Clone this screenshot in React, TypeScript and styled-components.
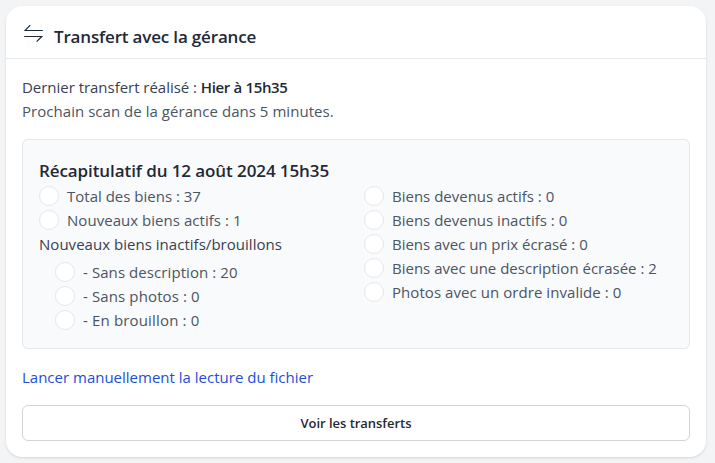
import React from 'react';
import styled, { createGlobalStyle } from 'styled-components';

const GlobalStyle = createGlobalStyle`
  *, *::before, *::after { box-sizing: border-box; }
  body {
    margin: 0;
    background: #f3f4f6;
    color: #374151;
    font-family: 'Open Sans', 'Noto Sans', sans-serif;
    font-size: 15px;
    line-height: 24px;
  }
`;

const Page = styled.main`
  padding: 6px 9px 6px 6px;
  height: 463px;
`;

const Card = styled.section`
  height: 451px;
  background: #fff;
  border-radius: 16px;
  box-shadow: 0 1px 3px rgba(0, 0, 0, 0.1), 0 1px 2px -1px rgba(0, 0, 0, 0.1);
`;

const CardHeader = styled.header`
  display: flex;
  align-items: center;
  gap: 10px;
  height: 53px;
  padding: 10px 16px 0 18px;
  border-bottom: 1px solid #e5e7eb;
`;

const TransferIcon = styled.svg`
  flex: none;
  width: 20px;
  height: 20px;
  margin-top: -8px;
`;

const CardTitle = styled.h2<{ $tracking?: number }>`
  margin: 0;
  color: #1f2937;
  font-size: 17px;
  font-weight: 600;
  line-height: 28px;
  white-space: nowrap;
  letter-spacing: ${({ $tracking = 0 }) => $tracking}px;
`;

const SummaryTitle = styled(CardTitle)`
  height: 28px;
  line-height: 30px;
`;

const CardBody = styled.div`
  display: flex;
  flex-direction: column;
  padding: 16px 16px 16px;
`;

const Line = styled.p<{ $muted?: boolean; $tracking?: number }>`
  margin: 0;
  color: ${({ $muted }) => ($muted ? '#4b5563' : '#374151')};
  white-space: nowrap;
  letter-spacing: ${({ $tracking = 0 }) => $tracking}px;
`;

const Strong = styled.strong`
  color: #1f2937;
  font-weight: 600;
  letter-spacing: -0.35px;
`;

const Summary = styled.section`
  height: 210px;
  margin-top: 16px;
  padding: 16px;
  background: #f9fafb;
  border: 1px solid #e5e7eb;
  border-radius: 6px;
`;

const Columns = styled.div`
  display: grid;
  grid-template-columns: 1fr 1fr;
  gap: 16px;
`;

const List = styled.ul<{ $nested?: boolean }>`
  margin: 0;
  padding: ${({ $nested }) => ($nested ? '4px 0 0 16px' : '0')};
  list-style: none;
`;

const Item = styled.li<{ $tracking?: number }>`
  display: flex;
  align-items: center;
  gap: 8px;
  height: 24px;
  color: #4b5563;
  white-space: nowrap;
  letter-spacing: ${({ $tracking = 0 }) => $tracking}px;
`;

const Dot = styled.span`
  flex: none;
  width: 20px;
  height: 20px;
  background: #fff;
  border: 1px solid #e5e7eb;
  border-radius: 50%;
`;

const Link = styled.a`
  align-self: flex-start;
  margin-top: 16px;
  color: #1d4ed8;
  text-decoration: none;
  white-space: nowrap;
`;

const Button = styled.button`
  height: 36px;
  margin-top: 16px;
  padding: 0;
  background: #fff;
  border: 1px solid #d1d5db;
  border-radius: 6px;
  color: #1f2937;
  font-family: inherit;
  font-size: 13px;
  font-weight: 600;
  line-height: 20px;
  letter-spacing: -0.04px;
`;

type Entry = { label: string; tracking?: number };

const totals: Entry[] = [
  { label: 'Total des biens : 37' },
  { label: 'Nouveaux biens actifs : 1', tracking: 0.04 },
];
const inactive: Entry[] = [
  { label: '- Sans description : 20', tracking: 0.08 },
  { label: '- Sans photos : 0', tracking: 0.12 },
  { label: '- En brouillon : 0', tracking: 0.16 },
];
const changes: Entry[] = [
  { label: 'Biens devenus actifs : 0' },
  { label: 'Biens devenus inactifs : 0' },
  { label: 'Biens avec un prix écrasé : 0', tracking: -0.03 },
  { label: 'Biens avec une description écrasée : 2' },
  { label: 'Photos avec un ordre invalide : 0', tracking: 0.06 },
];

function EntryList({ entries, nested }: { entries: Entry[]; nested?: boolean }) {
  return (
    <List $nested={nested}>
      {entries.map(({ label, tracking }) => (
        <Item key={label} $tracking={tracking}>
          <Dot />
          <span>{label}</span>
        </Item>
      ))}
    </List>
  );
}

export default function App() {
  return (
    <Page>
      <GlobalStyle />
      <Card>
        <CardHeader>
          <TransferIcon viewBox="0 0 20 20" fill="none" stroke="#1f2937" strokeWidth="1.2" aria-hidden="true">
            <path d="M18.8 7.5H1L6.2 2.2M.2 13.5h17.6L12.6 18.6" />
          </TransferIcon>
          <CardTitle $tracking={-0.17}>Transfert avec la gérance</CardTitle>
        </CardHeader>
        <CardBody>
          <Line $tracking={-0.03}>
            Dernier transfert réalisé : <Strong>Hier à 15h35</Strong>
          </Line>
          <Line $muted $tracking={0.04}>Prochain scan de la gérance dans 5 minutes.</Line>
          <Summary>
            <SummaryTitle as="h3" $tracking={-0.09}>Récapitulatif du 12 août 2024 15h35</SummaryTitle>
            <Columns>
              <div>
                <EntryList entries={totals} />
                <Line $tracking={0.03}>Nouveaux biens inactifs/brouillons</Line>
                <EntryList entries={inactive} nested />
              </div>
              <EntryList entries={changes} />
            </Columns>
          </Summary>
          <Link href="#">Lancer manuellement la lecture du fichier</Link>
          <Button type="button">Voir les transferts</Button>
        </CardBody>
      </Card>
    </Page>
  );
}
